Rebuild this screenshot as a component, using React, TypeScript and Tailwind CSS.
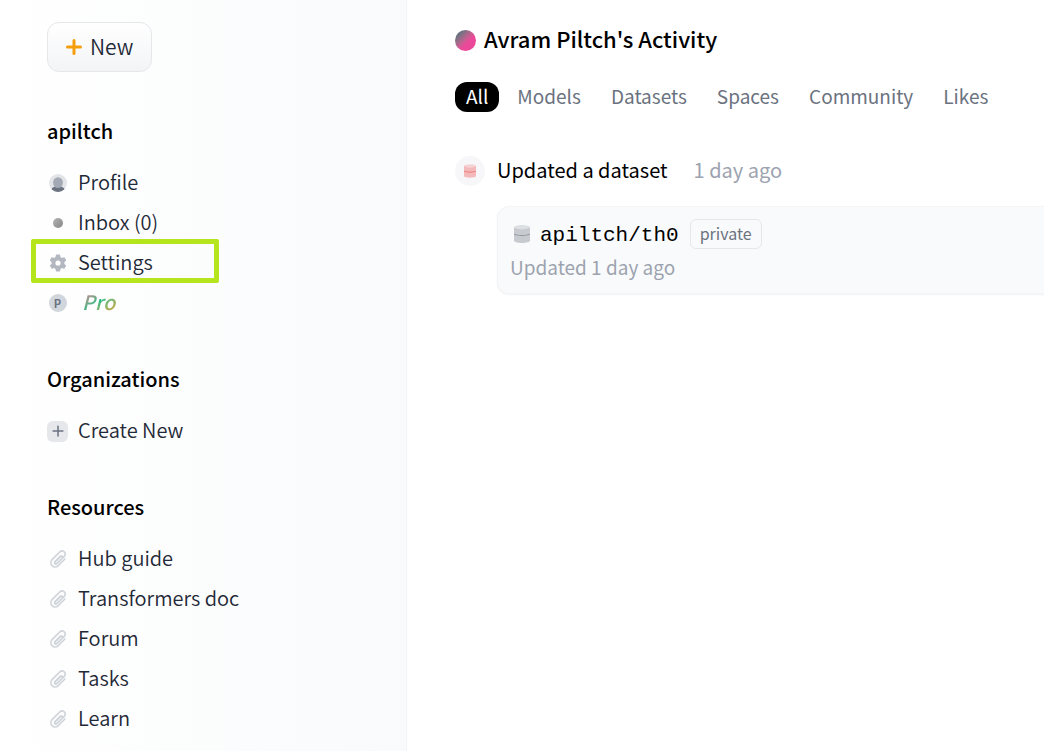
import type { ReactNode } from "react";

function UserIcon() {
  return (
    <svg className="size-[18px]" viewBox="0 0 18 18" aria-hidden="true">
      <defs>
        <clipPath id="avatar">
          <circle cx="9" cy="9" r="9" />
        </clipPath>
      </defs>
      <g clipPath="url(#avatar)">
        <rect width="18" height="18" fill="#e2e4e8" />
        <ellipse cx="9" cy="17" rx="7.2" ry="4.8" fill="#6b7280" />
        <ellipse cx="9" cy="8.6" rx="4.9" ry="5.4" fill="#a3a9b4" />
      </g>
    </svg>
  );
}

function GearIcon() {
  return (
    <svg className="size-[18px]" viewBox="0 0 18 18" aria-hidden="true">
      <g fill="#b3b7c0">
        <path
          fillRule="evenodd"
          d="M9 2.6a6.4 6.4 0 1 0 0 12.8A6.4 6.4 0 0 0 9 2.6zm0 3.8a2.6 2.6 0 1 1 0 5.2a2.6 2.6 0 0 1 0-5.2z"
        />
        {[0, 60, 120, 180, 240, 300].map((angle) => (
          <path key={angle} d="M7.5.6h3q.5 0 .6.5l.6 3.4H6.3l.6-3.4q.1-.5.6-.5z" transform={`rotate(${angle} 9 9)`} />
        ))}
      </g>
    </svg>
  );
}

function PaperclipIcon() {
  return (
    <svg className="size-[18px]" viewBox="0 0 18 18" fill="none" stroke="#d1d5db" strokeWidth="1.7" strokeLinecap="round" strokeLinejoin="round" aria-hidden="true">
      <path d="M11.4 6.3L5.9 11.8a1.3 1.3 0 0 0 1.9 1.9L15.2 6.3a3.1 3.1 0 0 0-4.4-4.4L3.1 9.6a4.3 4.3 0 0 0 6.1 6.1L15.9 9" />
      <path d="M5.9 11.8l5.5-5.5a1.2 1.2 0 0 1 1.7 1.7" />
    </svg>
  );
}

function PlusIcon({ className }: { className: string }) {
  return (
    <svg className={className} viewBox="0 0 16 16" fill="none" stroke="currentColor" strokeLinecap="round" aria-hidden="true">
      <path d="M8 1.5v13M1.5 8h13" />
    </svg>
  );
}

function DatabaseIcon({ className }: { className: string }) {
  return (
    <svg className={className} viewBox="0 0 16 18" fill="currentColor" aria-hidden="true">
      <path opacity=".2" d="M0 2.4C0 1 3.6 0 8 0s8 1 8 2.4C16 3.8 12.4 4.5 8 4.5S0 3.8 0 2.4z" />
      <path opacity=".35" d="M0 2.8c1.5 1.3 4.5 1.7 8 1.7s6.5-.4 8-1.7v13C16 17 12.4 18 8 18s-8-1-8-2.2z" />
      <path opacity=".6" d="M0 8.7c2 1 4.5 1.2 8 1.2s6-.2 8-1.2v.9c-2 1-4.5 1.3-8 1.3s-6-.3-8-1.3z" />
    </svg>
  );
}

function Section({ title, children }: { title: string; children: ReactNode }) {
  return (
    <section>
      <h2 className="mb-[17px] leading-[31px] font-medium text-black">{title}</h2>
      <ul>{children}</ul>
    </section>
  );
}

function NavItem({ icon, highlighted = false, children }: { icon: ReactNode; highlighted?: boolean; children: ReactNode }) {
  return (
    <li className="relative">
      <a href="#" className="flex h-10 items-center gap-[10px]">
        <span className="flex w-[21px] shrink-0 items-center justify-center">{icon}</span>
        <span className="pb-[2px]">{children}</span>
      </a>
      {highlighted && (
        <span className="pointer-events-none absolute -top-1 -left-4 h-[44px] w-[188px] rounded-[2px] border-5 border-[#b5e61d]" />
      )}
    </li>
  );
}

const resources = ["Hub guide", "Transformers doc", "Forum", "Tasks", "Learn"];
const filters = ["Models", "Datasets", "Spaces", "Community", "Likes"];

export default function App() {
  return (
    <div className="flex min-h-screen overflow-hidden bg-white font-['Noto_Sans_CJK_SC','Noto_Sans',sans-serif] text-[20px]">
      <aside className="w-[407px] shrink-0 border-r border-gray-100 bg-linear-to-r from-white to-gray-50 pt-[22px] pl-[47px] font-[350] text-[#1f2937]">
        <button className="flex h-[50px] items-center gap-2 rounded-xl border border-gray-200 bg-linear-to-b from-white to-gray-100 px-[18px] text-[21px]">
          <PlusIcon className="size-4 stroke-3 text-[#f59e0b]" />
          <span className="pb-px">New</span>
        </button>

        <nav className="mt-[43px] flex flex-col gap-10">
          <Section title="apiltch">
            <NavItem icon={<UserIcon />}>Profile</NavItem>
            <NavItem icon={<span className="size-[10px] rounded-full bg-linear-to-br from-[#b5b5b5] to-[#858585]" />}>Inbox (0)</NavItem>
            <NavItem icon={<GearIcon />} highlighted>
              Settings
            </NavItem>
            <NavItem
              icon={
                <span className="flex size-[18px] items-center justify-center rounded-full bg-gray-300 text-[11px] leading-none font-bold text-gray-500">
                  P
                </span>
              }
            >
              <span className="bg-linear-to-br from-[#ec4899] via-[#10b981] to-[#f59e0b] bg-clip-text px-1 font-medium text-transparent italic">Pro</span>
            </NavItem>
          </Section>

          <Section title="Organizations">
            <NavItem
              icon={
                <span className="flex size-[21px] items-center justify-center rounded-md bg-gray-200">
                  <PlusIcon className="size-3 stroke-2 text-gray-500" />
                </span>
              }
            >
              Create New
            </NavItem>
          </Section>

          <Section title="Resources">
            {resources.map((name) => (
              <NavItem key={name} icon={<PaperclipIcon />}>
                {name}
              </NavItem>
            ))}
          </Section>
        </nav>
      </aside>

      <main className="min-w-0 flex-1 pt-[22px] pl-12">
        <h1 className="flex items-center gap-2 text-[22px] leading-8 font-medium text-black">
          <span className="size-[21px] rounded-full bg-linear-to-br from-[#6b7280] from-20% to-[#ec4899] to-60%" />
          <span className="pb-1">Avram Piltch's Activity</span>
        </h1>

        <div className="mt-6 flex h-[30px] items-center text-[19px] leading-[28px] text-[#6b7280]">
          <button className="mr-[3px] h-[30px] rounded-xl bg-black px-[11px] pb-[2px] text-white">All</button>
          {filters.map((name) => (
            <button key={name} className="h-[30px] px-[15px] pb-[2px]">
              {name}
            </button>
          ))}
        </div>

        <article className="mt-11">
          <header className="flex h-[30px] items-center gap-3 whitespace-nowrap text-black">
            <span className="flex size-[30px] items-center justify-center rounded-full bg-gray-100/70">
              <DatabaseIcon className="h-[14px] w-3 text-[#ef4444]" />
            </span>
            <span className="pb-[2px]">Updated a dataset</span>
            <time className="ml-[14px] pb-[2px] text-[#9ca3af]">1 day ago</time>
          </header>

          <a href="#" className="mt-5 -mr-4 ml-[42px] block rounded-xl border border-gray-100 bg-gray-50 pt-3 pb-3 pl-3 shadow-xs">
            <div className="flex h-[30px] items-center">
              <DatabaseIcon className="ml-1 h-[18px] w-4 text-[#6b7280]" />
              <span className="ml-[10px] pt-1 font-['Liberation_Mono',monospace] text-[21px] text-black">apiltch/th0</span>
              <span className="ml-[11px] flex h-[30px] items-center rounded-md border border-gray-200 px-[9px] pb-[2px] text-[16px] text-[#6b7280]">private</span>
            </div>
            <p className="mt-1 text-[19px] leading-[28px] text-[#9ca3af]">Updated 1 day ago</p>
          </a>
        </article>
      </main>
    </div>
  );
}
